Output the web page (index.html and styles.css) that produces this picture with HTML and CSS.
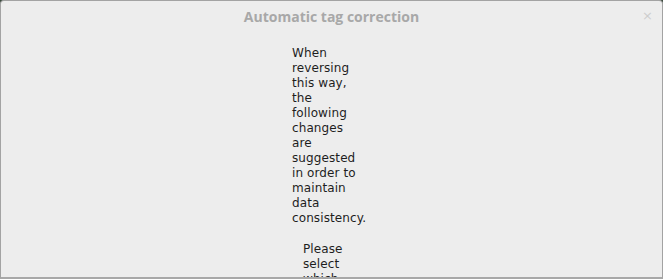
FILE: index.html
```html
<!DOCTYPE html>
<html lang="en">
<head>
    <meta charset="UTF-8">
    <title>Automatic tag correction</title>
    <link rel="stylesheet" href="styles.css">
</head>
<body>
    <div class="dialog">
        <!-- Title bar -->
        <div class="titlebar">
            <span class="title">Automatic tag correction</span>
            <span class="close">&#215;</span>
        </div>

        <!-- Message -->
        <div class="content">
            <div class="message">
                <p class="intro">When reversing this way, the following changes are suggested in order to maintain data consistency.</p>
                <p class="hint">Please select which changes you want to apply.</p>
            </div>
        </div>
    </div>
</body>
</html>
```

FILE: styles.css
```css
html, body {
    margin: 0;
    height: 100%;
    background-color: #3a4a3c;
    overflow: hidden;
}

.dialog {
    box-sizing: border-box;
    height: 279px;
    overflow: hidden;
    background-color: #ededed;
    border: 1px solid #a3a3a3;
    border-bottom: 2px solid #a8a8a8;
    border-radius: 4px 4px 0 0;
    font-family: 'DejaVu Sans', sans-serif;
    color: #1e1e1e;
}

.titlebar {
    height: 30px;
    display: flex;
    align-items: center;
    justify-content: center;
    position: relative;
}

.title {
    font-family: 'Open Sans', sans-serif;
    font-weight: bold;
    font-size: 14px;
    color: #a8a8a8;
}

.close {
    position: absolute;
    right: 9px;
    top: 7px;
    font-size: 13px;
    color: #cdcdcd;
}

.content {
    padding-top: 15px;
    padding-left: 291px;
}

.message {
    width: 68px;
    font-size: 12px;
    line-height: 15px;
    letter-spacing: 0.1px;
}

.message p {
    margin: 0;
}

.intro {
    margin-bottom: 16px !important;
}

.hint {
    padding-left: 11px;
}
```
